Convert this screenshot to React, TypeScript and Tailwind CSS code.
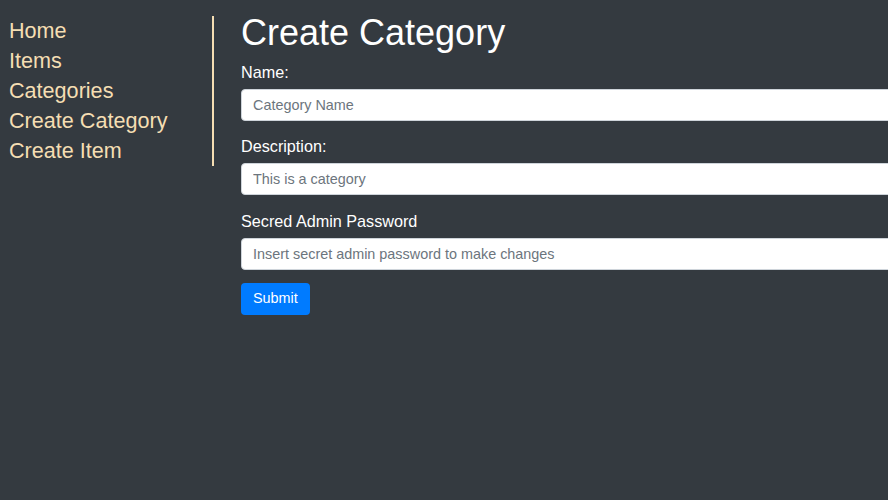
export default function App() {
  const links = ["Home", "Items", "Categories", "Create Category", "Create Item"]

  return (
    <div className="min-h-[500px] w-full overflow-hidden bg-[#343a40] font-['Liberation_Sans',Arial,sans-serif]">
      <div className="flex pt-4">
        {/* Sidebar */}
        <nav className="w-[214px] shrink-0 self-start border-r-2 border-[#f5deb3] pl-[9px]">
          {links.map((link) => (
            <a key={link} href="#" className="block text-[21.6px] leading-[30px] text-[#f5deb3]">
              {link}
            </a>
          ))}
        </nav>

        {/* Form */}
        <main className="shrink-0 pl-[27px]">
          <h1 className="-mt-[4px] text-[36px] leading-[42px] text-white">Create Category</h1>
          <form className="mt-[7px]">
            <label className="block text-[16.2px] leading-[22px] text-white">Name:</label>
            <input
              type="text"
              placeholder="Category Name"
              className="mt-[6px] block h-8 w-[680px] rounded border border-[#ced4da] bg-white px-[11px] text-[14.4px] text-[#495057] placeholder-[#6c757d] outline-none"
            />
            <label className="mt-[14px] block text-[16.2px] leading-[22px] text-white">Description:</label>
            <input
              type="text"
              placeholder="This is a category"
              className="mt-[6px] block h-8 w-[680px] rounded border border-[#ced4da] bg-white px-[11px] text-[14.4px] text-[#495057] placeholder-[#6c757d] outline-none"
            />
            <label className="mt-[15px] block text-[16.2px] leading-[22px] text-white">Secred Admin Password</label>
            <input
              type="password"
              placeholder="Insert secret admin password to make changes"
              className="mt-[6px] block h-8 w-[680px] rounded border border-[#ced4da] bg-white px-[11px] text-[14.4px] text-[#495057] placeholder-[#6c757d] outline-none"
            />
            <button
              type="submit"
              className="mt-[13px] h-8 rounded bg-[#007bff] px-3 text-[14.4px] text-white"
            >
              Submit
            </button>
          </form>
        </main>
      </div>
    </div>
  )
}
